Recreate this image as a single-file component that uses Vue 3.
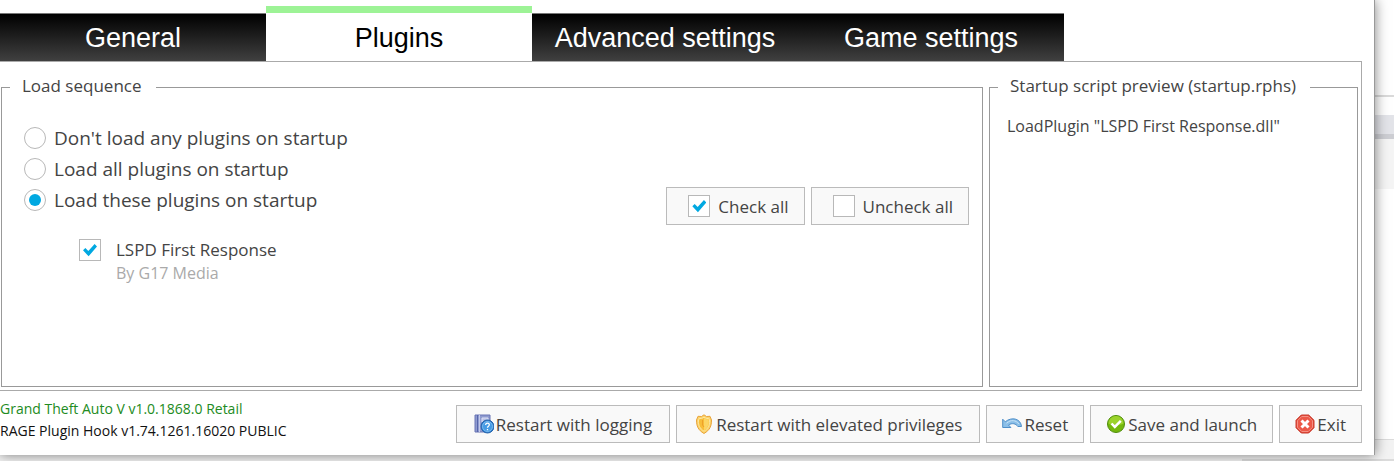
<template>
  <div class="desktop">
    <main class="window">
      <nav class="tabs" role="tablist">
        <button
          v-for="tab in tabs"
          :key="tab"
          type="button"
          role="tab"
          :aria-selected="tab === activeTab"
          :class="['tab', { active: tab === activeTab }]"
          @click="activeTab = tab"
        >
          {{ tab }}
        </button>
      </nav>

      <section class="panel">
        <fieldset class="group sequence">
          <legend>Load sequence</legend>
          <div class="sequence-top">
            <div class="modes">
              <label v-for="mode in modes" :key="mode.value" class="mode">
                <input
                  v-model="loadMode"
                  class="radio"
                  type="radio"
                  name="load-mode"
                  :value="mode.value"
                />
                {{ mode.text }}
              </label>
            </div>
            <div class="check-actions">
              <button type="button" class="btn check-btn" @click="setAll(true)">
                <span class="box checked"></span>
                Check all
              </button>
              <button type="button" class="btn check-btn" @click="setAll(false)">
                <span class="box"></span>
                Uncheck all
              </button>
            </div>
          </div>

          <ul class="plugins">
            <li v-for="plugin in plugins" :key="plugin.name">
              <label class="plugin">
                <input v-model="plugin.enabled" class="box" type="checkbox" />
                <span class="plugin-name">{{ plugin.name }}</span>
                <span class="plugin-author">By {{ plugin.author }}</span>
              </label>
            </li>
          </ul>
        </fieldset>

        <fieldset class="group preview">
          <legend>Startup script preview (startup.rphs)</legend>
          <p v-for="line in script" :key="line" class="script-line">{{ line }}</p>
        </fieldset>
      </section>

      <footer class="footer">
        <div class="versions">
          <div class="game">Grand Theft Auto V v1.0.1868.0 Retail</div>
          <div>RAGE Plugin Hook v1.74.1261.16020 PUBLIC</div>
        </div>

        <div class="actions">
          <button type="button" class="btn wide">
            <svg width="20" height="20" viewBox="0 0 20 20">
              <path d="M1 1h15v17H1z" fill="#8f9bd0" stroke="#6874b4" />
              <path d="M3.500 1v17" stroke="#5665aa" />
              <path d="M5.500 1v17" stroke="#c3caea" />
              <path d="M8 4h6v4H8z" fill="#b9c1e6" stroke="#dce0f4" />
              <circle cx="13.500" cy="12.500" r="6.500" fill="#2f7fd0" stroke="#2766ad" />
              <circle cx="13.500" cy="12.500" r="5" fill="#459be5" stroke="#8cc8f5" stroke-width=".8" />
              <path
                d="M11.600 11c.2-2.600 4-2.300 3.700 0-.2 1.300-1.800 1.300-1.800 2.700M13.500 15v1.300"
                fill="none"
                stroke="#fff"
                stroke-width="1.300"
              />
            </svg>
            Restart with logging
          </button>
          <button type="button" class="btn wide">
            <svg width="20" height="20" viewBox="0 0 20 20">
              <path
                d="M10 .8 12.500 2.500 16 2.300 17.500 6c0 6-1.500 10-7.500 13.500C4 16 2.500 12 2.500 6L4 2.300l3.500.2z"
                fill="#fbd36b"
                stroke="#e9a43c"
              />
              <path
                d="M10 3.200 12.300 4.500h2.500L15.600 7c0 4.300-1.400 7.500-5.600 10.200C5.800 14.500 4.400 11.300 4.400 7l.8-2.500h2.500z"
                fill="#f8bd38"
                stroke="#fde7a0"
              />
              <path d="M10 4v12.500c3.400-2.500 4.900-5.500 4.900-9.300l-.6-2h-2.100z" fill="#fcd665" />
              <path d="M8.500 6v5l1.500 2" fill="none" stroke="#eda12a" />
            </svg>
            Restart with elevated privileges
          </button>
          <button type="button" class="btn">
            <svg width="20" height="20" viewBox="0 0 20 20">
              <path
                d="M.7 5.200v8.300h8.200L6.500 11c3.500-2.300 7.500-1.500 9.300 1.500h3.700C18.800 4.500 9.500 2.500 3.300 7.800z"
                fill="#8bbfe8"
                stroke="#4f8fc9"
                stroke-linejoin="round"
              />
              <path d="M4.500 9.200c4.500-4 9.700-3 12.300.8" fill="none" stroke="#c5e2f7" />
            </svg>
            Reset
          </button>
          <button type="button" class="btn">
            <svg width="20" height="20" viewBox="0 0 20 20">
              <circle cx="10" cy="10" r="8.500" fill="#74b80c" stroke="#4f8d0c" />
              <path d="M2.500 9.500a7.500 7.500 0 0 1 15 0c-4 2-11 2-15 0" fill="#9bd32c" />
              <path
                d="m5.500 9.500 3.300 3.400 6-6"
                fill="none"
                stroke="#fff"
                stroke-width="2.500"
              />
            </svg>
            Save and launch
          </button>
          <button type="button" class="btn">
            <svg width="20" height="20" viewBox="0 0 20 20">
              <path
                d="M6.300 1h7.400L19 6.300v7.400L13.700 19H6.300L1 13.700V6.300z"
                fill="#df3f2f"
                stroke="#c83a2d"
              />
              <path
                d="M6.800 2.400h6.400l4.400 4.400v6.400l-4.400 4.400H6.800l-4.400-4.400V6.800z"
                fill="#ec5848"
                stroke="#f5978b"
              />
              <path d="m6.500 6.500 7 7m0-7-7 7" stroke="#fff" stroke-width="3" />
            </svg>
            Exit
          </button>
        </div>
      </footer>
    </main>
  </div>
</template>

<script setup>
import { computed, ref } from "vue";

const tabs = ["General", "Plugins", "Advanced settings", "Game settings"];
const activeTab = ref("Plugins");

const modes = [
  { value: "none", text: "Don't load any plugins on startup" },
  { value: "all", text: "Load all plugins on startup" },
  { value: "selected", text: "Load these plugins on startup" },
];
const loadMode = ref("selected");

const plugins = ref([
  { name: "LSPD First Response", author: "G17 Media", enabled: true },
]);

const setAll = (enabled) => {
  plugins.value.forEach((plugin) => {
    plugin.enabled = enabled;
  });
};

const script = computed(() => {
  if (loadMode.value === "none") return [];
  return plugins.value
    .filter((plugin) => loadMode.value === "all" || plugin.enabled)
    .map((plugin) => `LoadPlugin "${plugin.name}.dll"`);
});
</script>

<style>
body {
  margin: 0;
}
</style>

<style scoped>
.desktop {
  display: flex;
  box-sizing: border-box;
  min-height: 100vh;
  padding: 0 19px 6px 0;
  overflow: hidden;
  color: #444;
  font-family: "Open Sans", "Noto Sans", sans-serif;
  font-size: 17px;
  /* strips of the windows lying behind */
  background:
    linear-gradient(#dcdcdc, #dcdcdc) right bottom / 152px 2px no-repeat,
    linear-gradient(#dcdcdc 1px, #f3f3f3 1px) left bottom / 100% 22px no-repeat,
    linear-gradient(
      #fff 95px,
      #dadada 95px,
      #dadada 97px,
      #fff 97px,
      #fff 115px,
      #e3e4e9 115px,
      #e3e4e9 134px,
      #cdced3 134px,
      #cdced3 139px,
      #f5f5f5 139px,
      #f5f5f5 189px,
      #fff 189px
    );
}

.window {
  display: flex;
  flex: 1;
  flex-direction: column;
  box-sizing: border-box;
  padding: 6px 12px 0 0;
  border-right: 1px solid #999;
  background: #fff;
  box-shadow: 0 0 12px rgba(0, 0, 0, 0.5);
}

/* Tabs */
.tabs {
  display: flex;
}

.tab {
  flex: 0 1 266px;
  height: 48px;
  margin: 7px 0 0;
  padding: 2px 0 0;
  border: 0 solid #777;
  border-top-width: 1px;
  background: linear-gradient(#000, #404040);
  color: #fff;
  font-family: "Liberation Sans", Arial, sans-serif;
  font-size: 27px;
  white-space: nowrap;
}

.tab.active {
  height: 55px;
  margin: 0;
  border-top: 7px solid #9df396;
  background: #fff;
  color: #000;
}

/* Content */
.panel {
  display: grid;
  flex: 1;
  grid-template-columns: 982fr 369fr;
  gap: 6px;
  padding: 13px 3px 3px 1px;
  border: 1px solid #aaa;
  border-left: 0;
}

.group {
  min-width: 0;
  margin: 0;
  padding: 0;
  border: 1px solid #999;
}

.group legend {
  margin-left: 8px;
  padding: 0 14px 2px 12px;
  line-height: 22px;
}

.sequence-top {
  display: flex;
  justify-content: space-between;
  align-items: flex-end;
  padding: 23px 13px 0 22px;
}

.modes {
  padding-bottom: 10px;
}

.mode {
  display: flex;
  align-items: center;
  gap: 8px;
  height: 31px;
  font-size: 19px;
}

.check-actions {
  display: flex;
  gap: 6px;
}

.radio,
.box {
  display: grid;
  flex: none;
  place-content: center;
  box-sizing: border-box;
  width: 22px;
  height: 22px;
  margin: 0;
  border: 1px solid #b8b8b8;
  background: #fff;
  appearance: none;
}

.radio {
  border-radius: 50%;
}

.radio:checked::before {
  content: "";
  width: 12px;
  height: 12px;
  border-radius: 50%;
  background: #00a8e1;
}

.box:checked::before,
.box.checked::before {
  content: "";
  width: 14px;
  height: 14px;
  background: #00a8e1;
  clip-path: polygon(0 52%, 17% 35%, 38% 58%, 83% 8%, 100% 25%, 40% 95%);
}

.plugins {
  margin: 0;
  padding: 13px 0 0 77px;
  list-style: none;
}

.plugin {
  display: inline-grid;
  grid-template-columns: 22px auto;
  column-gap: 15px;
  align-items: center;
}

.plugin-name {
  line-height: 24px;
}

.plugin-author {
  grid-column: 2;
  color: #aaa;
  font-size: 16px;
  line-height: 22px;
}

.script-line {
  margin: 16px 17px 0;
  font-size: 16px;
  line-height: 22px;
}

/* Buttons */
.btn {
  display: flex;
  justify-content: center;
  align-items: center;
  gap: 2px;
  height: 38px;
  padding: 0 15px;
  border: 1px solid #bbb;
  background: #f9f9f9;
  color: #444;
  font-family: inherit;
  font-size: 17px;
  white-space: nowrap;
}

.btn.wide {
  padding: 0 17px;
}

.btn svg {
  flex: none;
}

.btn.check-btn {
  gap: 8px;
  padding: 0 15px 0 21px;
}

/* Footer */
.footer {
  display: flex;
  justify-content: space-between;
  align-items: center;
  box-sizing: border-box;
  height: 64px;
  padding-top: 2px;
}

.versions {
  padding-bottom: 8px;
  color: #111;
  font-size: 14px;
  line-height: 22px;
  white-space: nowrap;
}

.game {
  color: #228b22;
}

.actions {
  display: flex;
  gap: 6px;
}
</style>
